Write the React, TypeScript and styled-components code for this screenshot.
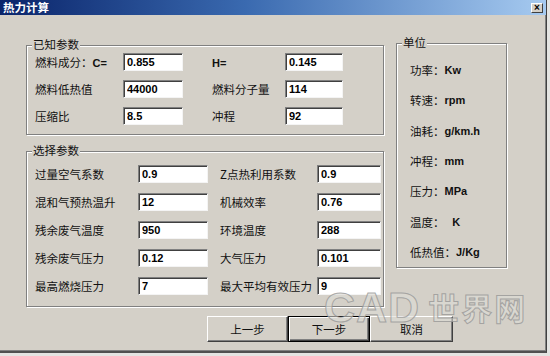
import React from "react";
import styled, { createGlobalStyle } from "styled-components";

const Global = createGlobalStyle`
  html, body { margin: 0; padding: 0; background: #e4e4e2; }
  body { font-family: "Noto Sans CJK SC", "Liberation Sans", sans-serif; }
  * { box-sizing: border-box; }
`;

const CJK = `"Noto Sans CJK SC", "Liberation Sans", sans-serif`;
const LAT = `"Liberation Sans", "Noto Sans CJK SC", sans-serif`;

const Window = styled.div`
  position: relative;
  width: 547px;
  height: 353px;
  background: #d4d0c8;
  border-right: 1px solid #404040;
  border-bottom: 2px solid #505050;
  box-shadow: inset -1px -1px 0 #808080;
  overflow: hidden;
`;

const TitleBar = styled.div`
  height: 15px;
  display: flex;
  align-items: center;
  background: linear-gradient(to right, #0a246a 0%, #3a6ab0 45%, #a6caf0 100%);
  padding-left: 3px;
`;

const Title = styled.span`
  color: #fff;
  font-family: ${CJK};
  font-weight: 700;
  font-size: 11.5px;
  line-height: 15px;
`;

const CloseBtn = styled.span`
  margin-left: auto;
  margin-right: 3px;
  width: 12px;
  height: 10px;
  background: #d4d0c8;
  border-top: 1px solid #fff;
  border-left: 1px solid #fff;
  border-right: 1px solid #404040;
  border-bottom: 1px solid #404040;
  display: flex;
  align-items: center;
  justify-content: center;
  font-family: ${LAT};
  font-weight: 700;
  font-size: 10px;
  line-height: 8px;
  color: #000;
`;

const Body = styled.div`
  display: flex;
  align-items: flex-start;
  padding: 28px 0 0 26px;
`;

const LeftCol = styled.div`
  display: flex;
  flex-direction: column;
  gap: 16px;
  margin-top: 2px;
  width: 358px;
`;

const Group = styled.div<{ $pt: number; $pb: number; $pl: number; $h?: number; $w?: number }>`
  position: relative;
  border: 1px solid #808080;
  box-shadow: inset 1px 1px 0 #fff, 1px 1px 0 #fff;
  padding: ${(p) => p.$pt}px 0 ${(p) => p.$pb}px ${(p) => p.$pl}px;
  ${(p) => (p.$h ? `height: ${p.$h}px;` : "")}
  ${(p) => (p.$w ? `width: ${p.$w}px;` : "")}
`;

const Legend = styled.span`
  position: absolute;
  top: -9px;
  left: 5px;
  padding: 0 1px;
  background: #d4d0c8;
  font-family: ${CJK};
  font-size: 11.5px;
  line-height: 15px;
  color: #111;
`;

const Rows = styled.div<{ $gap: number }>`
  display: flex;
  flex-direction: column;
  gap: ${(p) => p.$gap}px;
`;

const Row = styled.div`
  display: flex;
  align-items: center;
  height: 18px;
`;

const Label = styled.span<{ $w: number; $ml?: number }>`
  width: ${(p) => p.$w}px;
  margin-left: ${(p) => p.$ml ?? 0}px;
  font-family: ${CJK};
  font-size: 11.5px;
  color: #111;
  white-space: nowrap;
`;

const Latin = styled.span`
  font-family: ${LAT};
  font-weight: 700;
  font-size: 11px;
`;

const Field = styled.input<{ $w: number }>`
  width: ${(p) => p.$w}px;
  height: 18px;
  margin: 0;
  padding: 0 0 0 3px;
  background: #fff;
  border-top: 1px solid #808080;
  border-left: 1px solid #808080;
  border-right: 1px solid #f4f4f4;
  border-bottom: 1px solid #f4f4f4;
  box-shadow: inset 1px 1px 0 #404040;
  font-family: ${LAT};
  font-weight: 700;
  font-size: 11px;
  color: #000;
  outline: none;
`;

const UnitGroupWrap = styled.div`
  margin-left: 12px;
`;

const UnitList = styled.div`
  display: flex;
  flex-direction: column;
`;

const UnitRow = styled.div`
  height: 30.33px;
  display: flex;
  align-items: center;
  font-family: ${CJK};
  font-size: 11.5px;
  line-height: 14px;
  color: #111;
  white-space: pre;
`;

const ButtonBar = styled.div`
  display: flex;
  padding-left: 207px;
  margin-top: 9px;
`;

const Button = styled.div<{ $w: number; $default?: boolean }>`
  width: ${(p) => p.$w}px;
  height: 26px;
  display: flex;
  align-items: center;
  justify-content: center;
  background: #d4d0c8;
  font-family: ${CJK};
  font-size: 11.5px;
  line-height: 14px;
  color: #111;
  ${(p) =>
    p.$default
      ? `border: 1px solid #000; box-shadow: inset 1px 1px 0 #fff, inset -1px -1px 0 #404040, inset -2px -2px 0 #808080;`
      : `border-top: 1px solid #fff; border-left: 1px solid #fff; border-right: 1px solid #404040; border-bottom: 1px solid #404040; box-shadow: inset -1px -1px 0 #808080;`}
`;

const Watermark = styled.div`
  position: absolute;
  left: 324px;
  top: 292px;
  height: 30px;
  display: flex;
  align-items: center;
  gap: 8px;
  pointer-events: none;
  color: rgba(222, 220, 214, 0.6);
  -webkit-text-stroke: 1px rgba(150, 150, 150, 0.8);
`;

const WmLatin = styled.span`
  font-family: ${LAT};
  font-weight: 700;
  font-size: 43px;
  line-height: 28px;
  letter-spacing: 1px;
`;

const WmCJK = styled.span`
  font-family: ${CJK};
  font-weight: 700;
  font-size: 31px;
  line-height: 28px;
  letter-spacing: 2px;
`;

const known = [
  { l1: <>燃料成分：<Latin>C=</Latin></>, v1: "0.855", l2: <Latin>H=</Latin>, v2: "0.145" },
  { l1: "燃料低热值", v1: "44000", l2: "燃料分子量", v2: "114" },
  { l1: "压缩比", v1: "8.5", l2: "冲程", v2: "92" },
];

const chosen = [
  { l1: "过量空气系数", v1: "0.9", l2: "Z点热利用系数", v2: "0.9" },
  { l1: "混和气预热温升", v1: "12", l2: "机械效率", v2: "0.76" },
  { l1: "残余废气温度", v1: "950", l2: "环境温度", v2: "288" },
  { l1: "残余废气压力", v1: "0.12", l2: "大气压力", v2: "0.101" },
  { l1: "最高燃烧压力", v1: "7", l2: "最大平均有效压力", v2: "9" },
];

const units: [string, string][] = [
  ["功率：", "Kw"],
  ["转速：", "rpm"],
  ["油耗：", "g/km.h"],
  ["冲程：", "mm"],
  ["压力：", "MPa"],
  ["温度：   ", "K"],
  ["低热值：", "J/Kg"],
];

export default function App() {
  return (
    <>
      <Global />
      <Window>
        <TitleBar>
          <Title>热力计算</Title>
          <CloseBtn>×</CloseBtn>
        </TitleBar>
        <Body>
          <LeftCol>
            <Group $pt={7} $pb={9} $pl={8}>
              <Legend>已知参数</Legend>
              <Rows $gap={9}>
                {known.map((r, i) => (
                  <Row key={i}>
                    <Label $w={88}>{r.l1}</Label>
                    <Field $w={60} readOnly defaultValue={r.v1} />
                    <Label $w={73} $ml={29}>{r.l2}</Label>
                    <Field $w={58} readOnly defaultValue={r.v2} />
                  </Row>
                ))}
              </Rows>
            </Group>
            <Group $pt={13} $pb={11} $pl={8}>
              <Legend>选择参数</Legend>
              <Rows $gap={10}>
                {chosen.map((r, i) => (
                  <Row key={i}>
                    <Label $w={103}>{r.l1}</Label>
                    <Field $w={70} readOnly defaultValue={r.v1} />
                    <Label $w={97} $ml={12}>{r.l2}</Label>
                    <Field $w={64} readOnly defaultValue={r.v2} />
                  </Row>
                ))}
              </Rows>
            </Group>
          </LeftCol>
          <UnitGroupWrap>
            <Group $pt={11} $pb={0} $pl={13} $h={225} $w={111}>
              <Legend>单位</Legend>
              <UnitList>
                {units.map(([a, b]) => (
                  <UnitRow key={b}>
                    {a}
                    <Latin>{b}</Latin>
                  </UnitRow>
                ))}
              </UnitList>
            </Group>
          </UnitGroupWrap>
        </Body>
        <ButtonBar>
          <Button $w={81}>上一步</Button>
          <Button $w={82} $default>下一步</Button>
          <Button $w={83}>取消</Button>
        </ButtonBar>
        <Watermark>
          <WmLatin>CAD</WmLatin>
          <WmCJK>世界网</WmCJK>
        </Watermark>
      </Window>
    </>
  );
}
